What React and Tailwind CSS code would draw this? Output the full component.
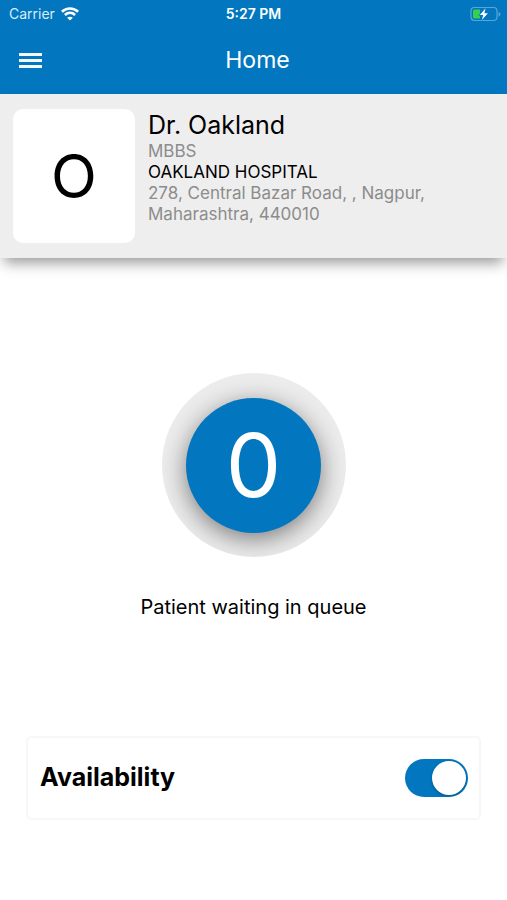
import React, { useState } from 'react'

function WifiIcon() {
  return (
    <svg className="h-[14px] w-[18px]" viewBox="0 0 18 14" fill="none" stroke="currentColor" strokeWidth="2.6" aria-hidden="true">
      <path d="M.9 4.7C5.6 .4 12.4 .4 17.1 4.7" />
      <path d="M3.9 8C6.9 5.2 11.1 5.2 14.1 8" />
      <path d="M9 13.6L6.1 10.8C7.7 9.3 10.3 9.3 11.9 10.8Z" fill="currentColor" stroke="none" />
    </svg>
  )
}

function BatteryIcon() {
  return (
    <svg className="h-4 w-[31px]" viewBox="0 0 31 16" fill="none" aria-hidden="true">
      <rect x="1" y="1.5" width="26" height="13" rx="3.5" stroke="#5ba5d6" strokeWidth="1.2" />
      <path d="M28.5 6v4.5c1.2-.4 2-1.2 2-2.25s-.8-1.85-2-2.25z" fill="#5ba5d6" />
      <path d="M4.5 3.5H10V12.5H4.5A1.5 1.5 0 0 1 3 11V5A1.5 1.5 0 0 1 4.5 3.5Z" fill="#35d04f" />
      <path d="M15.6 2.3L9.8 8.9H13.2L11.9 14L17.9 7.3H14.4Z" fill="#fff" stroke="#0277bf" strokeWidth="1.4" paintOrder="stroke" />
    </svg>
  )
}

function Header() {
  return (
    <header className="bg-[#0277bf] text-white">
      <div className="grid h-7 grid-cols-3 items-center px-[6px] text-sm">
        <div className="flex items-center gap-[6px] pl-[3px] text-[#d9ecf8]">
          <span>Carrier</span>
          <span className="text-white"><WifiIcon /></span>
        </div>
        <span className="text-center font-semibold">5:27 PM</span>
        <div className="flex justify-end">
          <BatteryIcon />
        </div>
      </div>
      <div className="grid h-[66px] grid-cols-[48px_1fr_40px] items-center pb-[2px]">
        <button type="button" aria-label="Menu" className="flex h-10 flex-col justify-center gap-[3px] pl-[19px] pr-[6px]">
          <span className="h-[3px] w-full bg-white/95" />
          <span className="h-[3px] w-full bg-white/95" />
          <span className="h-[3px] w-full bg-white/95" />
        </button>
        <h1 className="text-center text-[23px]">Home</h1>
      </div>
    </header>
  )
}

function DoctorCard() {
  return (
    <section className="flex gap-[13px] bg-[#eeeeee] px-[13px] pt-[15px] pb-[15px] shadow-[0_9px_13px_-4px_rgba(0,0,0,0.4)]">
      <div className="flex h-[134px] w-[122px] shrink-0 items-center justify-center rounded-[10px] bg-white text-[60px] leading-none text-black">
        O
      </div>
      <div className="min-w-0 text-[17px] leading-[21px] text-[#8c8c8c]">
        <h2 className="text-[25px] leading-8 text-black">Dr. Oakland</h2>
        <p>MBBS</p>
        <p className="text-black">OAKLAND HOSPITAL</p>
        <p className="max-w-[300px]">278, Central Bazar Road, , Nagpur, Maharashtra, 440010</p>
      </div>
    </section>
  )
}

function QueueCounter({ count }) {
  return (
    <section className="flex flex-col items-center pt-[115px]">
      <div className="flex h-[184px] w-[184px] items-center justify-center overflow-hidden rounded-full bg-[#ececec]">
        <div className="flex h-[135px] w-[135px] items-center justify-center rounded-full bg-[#0277bf] text-[88px] leading-none text-white shadow-[0_6px_24px_rgba(0,0,0,0.48)]">
          {count}
        </div>
      </div>
      <p className="mt-[35px] text-xl leading-[30px] text-black">Patient waiting in queue</p>
    </section>
  )
}

function AvailabilityToggle() {
  const [available, setAvailable] = useState(true)

  return (
    <label className="mx-[26px] mt-[114px] flex h-[84px] items-center justify-between rounded-[5px] border-2 border-[#f7f7f7] pl-3 pr-[11px]">
      <span className="text-[25px] font-bold text-black">Availability</span>
      <input
        type="checkbox"
        role="switch"
        checked={available}
        onChange={(e) => setAvailable(e.target.checked)}
        className="h-[38px] w-[63px] cursor-pointer appearance-none rounded-full bg-[#d1d5db] p-[2px] transition-colors before:block before:h-[34px] before:w-[34px] before:rounded-full before:bg-white before:shadow-[0_1px_3px_rgba(0,0,0,0.3)] before:content-[''] checked:bg-[#0277bf] checked:before:ml-auto"
      />
    </label>
  )
}

export default function App() {
  return (
    <div className="min-h-screen bg-white font-['Inter','Liberation_Sans',sans-serif]">
      <Header />
      <main>
        <DoctorCard />
        <QueueCounter count={0} />
        <AvailabilityToggle />
      </main>
    </div>
  )
}
